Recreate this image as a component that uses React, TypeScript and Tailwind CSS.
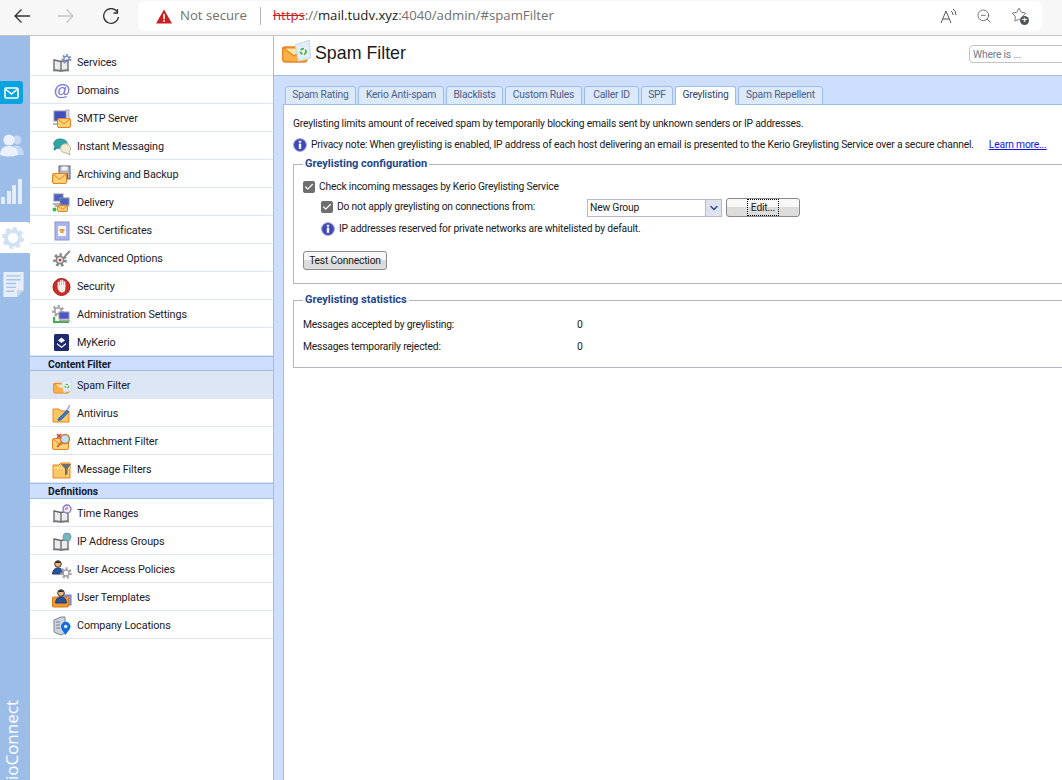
import { ZoomOut, Star, Check, ChevronDown } from "lucide-react";

const Envelope = ({ x = 0, y = 0, w = 14, h = 10 }: { x?: number; y?: number; w?: number; h?: number }) => (
  <g transform={`translate(${x} ${y})`}>
    <rect x="0.5" y="0.5" width={w - 1} height={h - 1} rx="1.5" fill="#fbd27a" stroke="#e9811d" />
    <path d={`M1 1 L${w / 2} ${h / 2 + 1} L${w - 1} 1`} fill="none" stroke="#e9811d" />
  </g>
);

const Book = () => (
  <g>
    <path d="M2 7 L9 8.5 L16 7 V17 L9 18 L2 17 Z" fill="#ececec" stroke="#66666b" strokeWidth="1.3" />
    <path d="M9 8.5 V18" stroke="#66666b" strokeWidth="1.3" />
    <path d="M1 17.5 H17" stroke="#77777c" strokeWidth="1.6" />
  </g>
);

const Cog = ({ cx, cy, r, color = "#7f8fc2" }: { cx: number; cy: number; r: number; color?: string }) => (
  <g>
    <circle cx={cx} cy={cy} r={r} fill="none" stroke={color} strokeWidth={r * 0.75} strokeDasharray={`${r * 0.45} ${r * 0.45}`} />
    <circle cx={cx} cy={cy} r={r * 0.72} fill="none" stroke={color} strokeWidth={r * 0.35} />
  </g>
);

const Person = ({ x = 0, y = 0 }: { x?: number; y?: number }) => (
  <g transform={`translate(${x} ${y})`}>
    <circle cx="6" cy="4" r="3.3" fill="#e8b77f" stroke="#43372c" />
    <path d="M3 3 Q6 -1 9 3 Z" fill="#2f2a28" />
    <path d="M0.5 14 Q1 8 6 8 Q11 8 11.5 14 Z" fill="#27539b" stroke="#1d3a70" />
  </g>
);

const SpamIcon = ({ size = 20 }: { size?: number }) => (
  <svg width={size} height={size * 0.83} viewBox="0 0 29 24">
    <rect x="0.7" y="8" width="24" height="15" rx="2.5" fill="#f9b044" stroke="#ec8420" strokeWidth="1.4" />
    <path d="M1.5 9 L12 17 L23 9 Z" fill="#fde6a6" stroke="#ec8420" strokeWidth="1.1" />
    <path d="M13 6 L27.5 1 L28.5 19 L16.5 22 Z" fill="#dfeef6" stroke="#c3d8e6" />
    <rect x="17.5" y="8.5" width="7.5" height="8" fill="#f3f9f6" />
    <circle cx="21.2" cy="12.5" r="2.8" fill="none" stroke="#4fb04f" strokeWidth="1.8" strokeDasharray="3.6 1.4" />
  </svg>
);

const NavIcon = ({ name }: { name: string }) => {
  const s = { width: 20, height: 20, viewBox: "0 0 20 20" };
  switch (name) {
    case "Services":
      return (
        <svg {...s}>
          <Book />
          <Cog cx={14.5} cy={6} r={3.6} />
        </svg>
      );
    case "Domains":
      return (
        <svg {...s}>
          <text x="10" y="15" textAnchor="middle" fontSize="17" fontWeight="700" fill="#7a79dd" fontFamily="'Liberation Sans', sans-serif">@</text>
        </svg>
      );
    case "SMTP Server":
      return (
        <svg {...s}>
          <rect x="2" y="2" width="13" height="10" fill="#3f4fc0" stroke="#9a9aa8" />
          <rect x="14" y="1" width="3" height="12" fill="#d5d7dc" stroke="#8c8c95" strokeWidth="0.6" />
          <path d="M1 15 H9" stroke="#b6b6bd" strokeWidth="2" />
          <Envelope x={5} y={9} w={14} h={10} />
        </svg>
      );
    case "Instant Messaging":
      return (
        <svg {...s}>
          <path d="M8 2 C13 2 16 5 15 8 C14 11 10 12 6 11 L2 13 L3 9.5 C0 6 3 2 8 2 Z" fill="#2fa6a5" stroke="#268a8c" />
          <path d="M12 7 C16 6 19 9 18.5 12 C18 14 17 15 17 15 L18 18 L14 16 C11 16 8.5 14 8.5 11.5 C8.5 9 10 7.5 12 7 Z" fill="#f0ecd6" stroke="#bcb89c" />
        </svg>
      );
    case "Archiving and Backup":
      return (
        <svg {...s}>
          <rect x="7" y="1" width="11" height="13" fill="#b2b5c5" stroke="#5f6275" />
          <rect x="9.5" y="1.5" width="6" height="4" fill="#f4f4f8" />
          <rect x="9" y="8.5" width="7" height="5" fill="#5f6275" />
          <Envelope x={0} y={8} w={15} h={11} />
        </svg>
      );
    case "Delivery":
      return (
        <svg {...s}>
          <rect x="2" y="1" width="9" height="7" fill="#4a63c9" stroke="#8c8c95" />
          <rect x="8" y="5" width="9" height="7" fill="#4a63c9" stroke="#8c8c95" />
          <path d="M1 11 H9 M3 13 H17" stroke="#9a9aa2" strokeWidth="1.6" />
          <circle cx="2.5" cy="16.5" r="2" fill="#39b54a" />
          <Envelope x={5} y={12} w={11} h={7} />
        </svg>
      );
    case "SSL Certificates":
      return (
        <svg {...s}>
          <rect x="3" y="1" width="14" height="18" fill="#aab6ea" stroke="#8793cf" />
          <rect x="6" y="5" width="8" height="10" fill="#f7f7fb" />
          <rect x="7.5" y="8" width="5" height="2" fill="#ee9a3d" />
          <rect x="8.5" y="10" width="3" height="2" fill="#ee9a3d" />
        </svg>
      );
    case "Advanced Options":
      return (
        <svg {...s}>
          <Cog cx={8} cy={11} r={5} color="#85858a" />
          <circle cx="8" cy="11" r="1.5" fill="#c43a3a" />
          <path d="M13 7 L18 2" stroke="#8a8a90" strokeWidth="2" />
        </svg>
      );
    case "Security":
      return (
        <svg {...s}>
          <circle cx="9.5" cy="10" r="8.5" fill="#cc2f26" stroke="#a81f1a" />
          <path d="M6.5 8 V5.5 M8.5 9 V4 M10.5 9 V3.5 M12.5 9 V5" stroke="#f8eeee" strokeWidth="1.7" fill="none" strokeLinecap="round" />
          <path d="M5.6 8 H13.4 V12 Q13 15.5 10 15.5 Q7 15.5 5.6 11 Z" fill="#f8eeee" />
        </svg>
      );
    case "Administration Settings":
      return (
        <svg {...s}>
          <Cog cx={6} cy={6} r={4.5} color="#a4a4a8" />
          <rect x="7" y="7" width="10" height="7" fill="#4a55cb" stroke="#9c9ca4" />
          <path d="M2 12 V17 H17" stroke="#43ad4c" strokeWidth="2" fill="none" />
          <path d="M7 15.5 H18" stroke="#a8a8ae" strokeWidth="1.6" />
        </svg>
      );
    case "MyKerio":
      return (
        <svg {...s}>
          <rect x="2" y="1" width="15" height="17" rx="1.5" fill="#1e2a6b" />
          <path d="M9.5 4.5 L13 7.5 L9.5 10 L6 7.5 Z" fill="#fff" />
          <path d="M5 10 L9.5 13.5 L14 10 L14 11.5 L9.5 15 L5 11.5 Z" fill="#fff" />
        </svg>
      );
    case "Spam Filter":
      return <SpamIcon size={19} />;
    case "Antivirus":
      return (
        <svg {...s}>
          <path d="M1 5 H7 L9 7 H17 V18 H1 Z" fill="#fcc765" stroke="#e9811d" />
          <path d="M6 15 L15 6 L17 8 L9 16 L6 16.5 Z" fill="#3a7ac8" stroke="#27579b" strokeWidth="0.7" />
          <path d="M15 6 L18 1" stroke="#a9a9d8" strokeWidth="1.5" />
        </svg>
      );
    case "Attachment Filter":
      return (
        <svg {...s}>
          <Envelope x={0} y={6} w={17} h={12} />
          <circle cx="13" cy="7" r="4.5" fill="#bfe3f5" stroke="#c87936" strokeWidth="1.4" />
          <path d="M5 2 L9 6 M9 2 L5 6" stroke="#d33a3a" strokeWidth="1.6" />
          <path d="M10 10 L5 15" stroke="#c87936" strokeWidth="2" />
        </svg>
      );
    case "Message Filters":
      return (
        <svg {...s}>
          <path d="M1 5 H7 L9 3 H18 V18 H1 Z" fill="#fcc765" stroke="#e9811d" />
          <path d="M1 8 H18" stroke="#fde7ae" />
          <path d="M9 4 H19 L15.5 9 V14 L13 15.5 V9 Z" fill="#6f6f70" />
        </svg>
      );
    case "Time Ranges":
      return (
        <svg {...s}>
          <Book />
          <circle cx="15" cy="5" r="4" fill="#f0e9f2" stroke="#8478c6" strokeWidth="1.3" />
          <path d="M15 3 V5 H13" stroke="#c0455b" fill="none" />
        </svg>
      );
    case "IP Address Groups":
      return (
        <svg {...s}>
          <Book />
          <circle cx="15" cy="5" r="4" fill="#65b7dd" stroke="#7d95bb" />
          <path d="M13 3 Q16 3 16.5 6 L14.5 7.5 Z" fill="#8cc64b" />
        </svg>
      );
    case "User Access Policies":
      return (
        <svg {...s}>
          <Person x={0} y={0} />
          <Cog cx={14} cy={13} r={4.2} color="#a4a4a8" />
        </svg>
      );
    case "User Templates":
      return (
        <svg {...s}>
          <rect x="9" y="7" width="10" height="10" fill="#8d9adf" stroke="#6c7ac7" />
          <rect x="0.5" y="9" width="16" height="10" rx="1" fill="#f09b2f" stroke="#d9791a" />
          <Person x={3} y={1} />
        </svg>
      );
    default:
      return (
        <svg {...s}>
          <path d="M2 4 L9 1 H13 V17 L9 19 L2 16 Z" fill="#cdd2dc" stroke="#7d8390" />
          <path d="M4 6 H8 M4 9 H8 M4 12 H8" stroke="#7d8390" strokeWidth="1.2" />
          <path d="M13.5 19 C10 14 9 12.5 9 10.5 A4.7 4.7 0 0 1 18.5 10.5 C18.5 12.5 17 14 13.5 19 Z" fill="#0f6fe8" />
          <circle cx="13.7" cy="10.5" r="1.7" fill="#fff" />
        </svg>
      );
  }
};

const InfoIcon = () => (
  <svg width="14" height="14" viewBox="0 0 14 14" className="shrink-0">
    <circle cx="7" cy="7" r="6.3" fill="#3e48b8" stroke="#8c90c8" strokeWidth="1" />
    <rect x="5.8" y="5.6" width="2.4" height="5.2" fill="#fff" />
    <rect x="5.8" y="2.8" width="2.4" height="1.9" fill="#fff" />
  </svg>
);

const CheckBox = () => (
  <span className="w-[12px] h-[12px] shrink-0 rounded-[2px] bg-[#6e6e6e] flex items-center justify-center">
    <Check size={10} strokeWidth={3} className="text-white" />
  </span>
);

const Row = ({ label, active, first }: { label: string; active?: boolean; first?: boolean }) => (
  <div
    className={`flex items-center pl-[22px] gap-[5px] border-b border-[#dde6f3] text-[#1a1a2a] ${first ? "h-[40px] pt-[15px]" : "h-[28px] pt-[3px]"} ${active ? "bg-[#dce6f5]" : ""}`}
  >
    <span className="w-[20px] h-[20px] flex items-center justify-center shrink-0">
      <NavIcon name={label} />
    </span>
    {label}
  </div>
);

const SectionHead = ({ label, tall }: { label: string; tall?: boolean }) => (
  <div className={`${tall ? "h-[16px]" : "h-[15px]"} leading-[15px] bg-[#cddeff] border-y border-[#9dbde9] pl-[18px] font-bold text-[#10182e] text-[10.3px] tracking-normal`}>
    {label}
  </div>
);

const tabs = ["Spam Rating", "Kerio Anti-spam", "Blacklists", "Custom Rules", "Caller ID", "SPF", "Greylisting", "Spam Repellent"];
const tabWidths = ["w-[71px]", "w-[86px]", "w-[57px]", "w-[77px]", "w-[55px]", "w-[32px]", "w-[61px]", "w-[85px]"];

export default function App() {
  return (
    <div className="w-[1062px] h-[780px] overflow-hidden flex flex-col bg-white text-[10.8px] tracking-[-0.12px] font-['Roboto','Liberation_Sans',sans-serif]">
      <div className="h-[36px] shrink-0 bg-[#f7f7f7] border-b border-[#c4c4c4] flex pt-[1px] tracking-normal font-['Open_Sans','Noto_Sans',sans-serif]">
        <div className="w-[138px] shrink-0 flex items-start pt-[7px] pl-[13px] text-[#333]">
          <svg width="18" height="16" viewBox="0 0 18 16" fill="none" stroke="currentColor" strokeWidth="1.3">
            <path d="M17 8 H2 M8.5 1.5 L2 8 L8.5 14.5" />
          </svg>
          <svg width="18" height="16" viewBox="0 0 18 16" fill="none" stroke="#c6c6c6" strokeWidth="1.3" className="ml-[26px]">
            <path d="M1 8 H16 M9.5 1.5 L16 8 L9.5 14.5" />
          </svg>
          <svg width="18" height="18" viewBox="0 0 18 18" fill="none" stroke="currentColor" strokeWidth="1.3" className="ml-[27px]">
            <path d="M15 3.5 A7.4 7.4 0 1 0 16.4 9" />
            <path d="M15.5 1 V5 H11.5" />
          </svg>
        </div>
        <div className="w-[904px] h-[30px] bg-white rounded-[6px] flex items-center text-[13.2px] text-[#707070] pl-[18px]">
          <svg width="16" height="15" viewBox="0 0 15 14">
            <path d="M7.5 0.5 L15 13.5 H0 Z" fill="#c9201f" />
            <rect x="6.8" y="4.5" width="1.5" height="5" fill="#fff" />
            <rect x="6.8" y="10.3" width="1.5" height="1.6" fill="#fff" />
          </svg>
          <span className="ml-[8px]">Not secure</span>
          <span className="w-px h-[18px] bg-[#b5b5b5] ml-[13px] mr-[12px]" />
          <span>
            <span className="text-[#c9201f] line-through">https</span>://<span className="text-[#222]">mail.tudv.xyz</span>:4040/admin/#spamFilter
          </span>
          <div className="ml-auto flex items-center pr-[13px] text-[#555]">
            <svg width="17" height="16" viewBox="0 0 17 16" fill="none" stroke="currentColor" strokeWidth="1">
              <path d="M1 15 L6 3 L11 15 M3 11 H9" />
              <path d="M11 3 Q13 4 13 7 M13 1 Q16 3 16 7" />
            </svg>
            <ZoomOut size={16} strokeWidth={1.2} className="ml-[19px]" />
            <span className="relative ml-[19px] w-[18px] h-[18px]">
              <Star size={16} strokeWidth={1.2} />
              <span className="absolute right-0 bottom-0 w-[9px] h-[9px] rounded-full bg-[#555] text-white text-[9px] leading-[8px] text-center font-bold">+</span>
            </span>
          </div>
        </div>
      </div>

      <div className="flex flex-1 min-h-0">
        <div className="relative w-[30px] shrink-0 bg-[#9dbde9] overflow-hidden flex flex-col items-start">
          <div className="mt-[45px] w-[23px] h-[23px] rounded-r-[3px] bg-[#0ba2e0] flex items-center justify-center">
            <svg width="15" height="12" viewBox="0 0 15 12" fill="none" stroke="#fff" strokeWidth="1.6">
              <rect x="1" y="1" width="13" height="10" rx="1" />
              <path d="M2 2.5 L7.5 7 L13 2.5" />
            </svg>
          </div>
          <svg width="24" height="24" viewBox="0 0 24 24" className="mt-[29px]">
            <circle cx="17" cy="7" r="4.4" fill="#c6d9f1" />
            <path d="M14 13 Q23 11 24 22 H16 Z" fill="#c6d9f1" />
            <circle cx="9" cy="7" r="5.6" fill="#eaf1fa" />
            <path d="M0 22 Q0 13 9 13 Q18 13 18 22 Q9 25 0 22 Z" fill="#eaf1fa" />
          </svg>
          <div className="mt-[22px] ml-[1px] flex items-end gap-[1.5px] h-[25px]">
            <span className="w-[4px] h-[7px] bg-[#e3edf9]" />
            <span className="w-[4px] h-[13px] bg-[#e3edf9]" />
            <span className="w-[4px] h-[19px] bg-[#e3edf9]" />
            <span className="w-[4px] h-[25px] bg-[#e3edf9]" />
          </div>
          <div className="mt-[18px] w-full h-[31px] bg-white rounded-tr-[3px] flex items-center pl-[2px]">
            <svg width="22" height="22" viewBox="0 0 22 22">
              <circle cx="11" cy="11" r="7" fill="none" stroke="#d3e1f4" strokeWidth="4" />
              <circle cx="11" cy="11" r="9.5" fill="none" stroke="#d3e1f4" strokeWidth="3" strokeDasharray="4 3.4" />
            </svg>
          </div>
          <svg width="21" height="25" viewBox="0 0 21 26" className="mt-[19px] ml-[3px]">
            <path d="M0 0 H21 V19 L14 26 H0 Z" fill="#e6eefa" />
            <path d="M14 26 V19 H21 Z" fill="#c5d5ec" />
            <path d="M3 4 H18 M3 8 H18 M3 12 H13 M3 16 H13 M3 20 H11" stroke="#a8c2e8" strokeWidth="1.5" />
          </svg>
          <span className="absolute left-[2px] top-[666px] [writing-mode:vertical-rl] rotate-180 text-white text-[17px] leading-[20px] tracking-normal font-['Open_Sans',sans-serif] whitespace-nowrap h-[105px]">
            KerioConnect
          </span>
        </div>

        <div className="w-[244px] shrink-0 border-r border-[#9dbde9] flex flex-col">
          <Row first label="Services" />
          <Row label="Domains" />
          <Row label="SMTP Server" />
          <Row label="Instant Messaging" />
          <Row label="Archiving and Backup" />
          <Row label="Delivery" />
          <Row label="SSL Certificates" />
          <Row label="Advanced Options" />
          <Row label="Security" />
          <Row label="Administration Settings" />
          <Row label="MyKerio" />
          <SectionHead label="Content Filter" />
          <Row active label="Spam Filter" />
          <Row label="Antivirus" />
          <Row label="Attachment Filter" />
          <Row label="Message Filters" />
          <SectionHead tall label="Definitions" />
          <Row label="Time Ranges" />
          <Row label="IP Address Groups" />
          <Row label="User Access Policies" />
          <Row label="User Templates" />
          <Row label="Company Locations" />
        </div>

        <div className="flex-1 min-w-0 flex flex-col text-[10.3px] tracking-[-0.19px]">
          <div className="h-[40px] shrink-0 border-b border-[#9dbde9] flex items-start pt-[3px] pl-[8px] relative">
            <SpamIcon size={29} />
            <h1 className="ml-[4px] mt-[2px] text-[17.8px] leading-[24px] tracking-normal text-[#1a1a1a] font-['Liberation_Sans',sans-serif]">Spam Filter</h1>
            <div className="absolute left-[695px] top-[9px] w-[120px] h-[18px] border border-[#c4c4c4] rounded-l-[4px] pl-[3px] leading-[18px] text-[#707a8c] bg-white">
              Where is ...
            </div>
          </div>

          <div className="flex-1 min-h-0 bg-[#cddeff] pl-[9px] flex flex-col">
            <div className="h-[29px] shrink-0 flex items-end gap-[2px] border-b border-[#9dbde9] pl-[2px]">
              {tabs.map((t, i) => {
                const active = t === "Greylisting";
                return (
                  <div
                    key={t}
                    className={`${tabWidths[i]} shrink-0 h-[19px] -mb-px rounded-t-[3px] border border-[#9dbde9] text-center leading-[16px] whitespace-nowrap ${active ? "bg-white border-b-white text-[#2b3f6d]" : "bg-[#dce9fb] text-[#4a5e86]"}`}
                  >
                    {t}
                  </div>
                );
              })}
            </div>

            <div className="flex-1 bg-white border-l border-[#9dbde9] pl-[9px] text-[#1a1a1a]">
              <p className="h-[14px] leading-[14px] mt-[12px]">
                Greylisting limits amount of received spam by temporarily blocking emails sent by unknown senders or IP addresses.
              </p>
              <div className="mt-[6px] flex items-center gap-[4px] h-[16px]">
                <InfoIcon />
                <span className="whitespace-nowrap">
                  Privacy note: When greylisting is enabled, IP address of each host delivering an email is presented to the Kerio Greylisting Service over a secure channel.
                </span>
                <a className="ml-[11px] text-[#1414e6] underline whitespace-nowrap">Learn more...</a>
              </div>

              <fieldset className="mt-[4px] w-[900px] h-[127px] border border-[#b4b4c4] pl-[9px]">
                <legend className="px-[2px] font-bold text-[#24478c] text-[11px] tracking-normal leading-[14px]">Greylisting configuration</legend>
                <div className="mt-[9px] flex items-center gap-[4px] h-[14px]">
                  <CheckBox />
                  <span>Check incoming messages by Kerio Greylisting Service</span>
                </div>
                <div className="mt-[4px] ml-[18px] flex items-center h-[19px]">
                  <span className="flex items-center mb-[2px]">
                    <CheckBox />
                    <span className="ml-[4px] w-[250px]">Do not apply greylisting on connections from:</span>
                  </span>
                  <div className="w-[135px] h-[18px] border border-[#b8b8cc] flex items-center pl-[2px]">
                    <span className="flex-1">New Group</span>
                    <span className="w-[16px] h-full bg-[#dfe3ee] border-l border-[#b8b8cc] flex items-center justify-center">
                      <ChevronDown size={12} strokeWidth={3} className="text-[#2c4c8c]" />
                    </span>
                  </div>
                  <div className="ml-[4px] w-[74px] h-[19px] rounded-[3px] border border-[#8a8a8a] bg-[linear-gradient(#f8f8f8_50%,#dcdcdc_50%)] flex items-center justify-center">
                    <span className="border border-dotted border-black h-[17px] leading-[15px] w-[32px] text-center">Edit...</span>
                  </div>
                </div>
                <div className="mt-[4px] ml-[18px] flex items-center gap-[4px] h-[16px]">
                  <InfoIcon />
                  <span>IP addresses reserved for private networks are whitelisted by default.</span>
                </div>
                <div className="mt-[14px] w-[84px] h-[19px] rounded-[3px] border border-[#8a8a8a] bg-[linear-gradient(#f8f8f8_50%,#dcdcdc_50%)] leading-[17px] text-center">
                  Test Connection
                </div>
              </fieldset>

              <fieldset className="mt-[9px] w-[900px] h-[75px] border border-[#b4b4c4] pl-[9px]">
                <legend className="px-[2px] font-bold text-[#24478c] text-[11px] tracking-normal leading-[14px]">Greylisting statistics</legend>
                <div className="mt-[11px] flex h-[14px] leading-[14px]">
                  <span className="w-[274px]">Messages accepted by greylisting:</span>
                  <span>0</span>
                </div>
                <div className="mt-[8px] flex h-[14px] leading-[14px]">
                  <span className="w-[274px]">Messages temporarily rejected:</span>
                  <span>0</span>
                </div>
              </fieldset>
            </div>
          </div>
        </div>
      </div>
    </div>
  );
}
